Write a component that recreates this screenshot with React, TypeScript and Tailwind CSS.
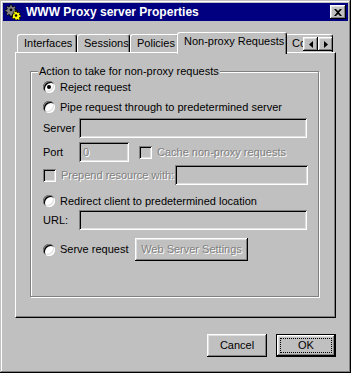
import React from "react";

// Win95 style bevels
const raised =
  "shadow-[inset_-1px_-1px_#000,inset_1px_1px_#fff,inset_-2px_-2px_#808080,inset_2px_2px_#dfdfdf]";
const sunken =
  "shadow-[inset_1px_1px_#808080,inset_-1px_-1px_#fff,inset_2px_2px_#000,inset_-2px_-2px_#dfdfdf]";
const disabledText = "text-[#808080] [text-shadow:1px_1px_0_#fff]";

function Radio({ checked }: { checked?: boolean }) {
  return (
    <div className={`w-[12px] h-[12px] rounded-full bg-white shrink-0 flex items-center justify-center ${sunken}`}>
      {checked && <div className="w-[4px] h-[4px] rounded-full bg-black" />}
    </div>
  );
}

function Checkbox() {
  return <div className={`w-[13px] h-[13px] bg-[#c0c0c0] shrink-0 ${sunken}`} />;
}

function Field({ w, value }: { w: string; value?: string }) {
  return (
    <div className={`${w} h-[20px] bg-[#c0c0c0] flex items-center pl-[4px] ${sunken}`}>
      {value && <span className={disabledText}>{value}</span>}
    </div>
  );
}

function Tab({ label, w, selected }: { label: string; w: string; selected?: boolean }) {
  return (
    <div
      className={`${w} ${
        selected
          ? "h-[22px] -mb-[2px] -ml-[2px] -mr-[2px] relative z-10 items-start pt-[2px]"
          : "h-[18px] items-center"
      } flex pl-[6px] bg-[#c0c0c0] border-l border-t border-white border-r border-r-black rounded-t-[3px] shadow-[inset_-1px_0_#808080] whitespace-nowrap`}
    >
      {label}
    </div>
  );
}

function Gears() {
  return (
    <svg width="16" height="16" viewBox="0 0 16 16">
      <g fill="#808080" stroke="#000" strokeWidth="0.8">
        <path d="M5 0.8h2v1.6l1.3.6 1.1-1.1 1.4 1.4-1.1 1.1.6 1.3h1.6v2h-1.6l-.6 1.3 1.1 1.1-1.4 1.4-1.1-1.1-1.3.6v1.6H5v-1.6l-1.3-.6-1.1 1.1-1.4-1.4 1.1-1.1-.6-1.3H.1v-2h1.6l.6-1.3-1.1-1.1 1.4-1.4 1.1 1.1L5 2.4z" />
      </g>
      <circle cx="6" cy="5.8" r="1.4" fill="#000" />
      <g fill="#ffff00" stroke="#000" strokeWidth="0.8">
        <path d="M10 7h2v1.3l1 .5.9-.9 1.3 1.3-.9.9.5 1H16v2h-1.2l-.5 1 .9.9-1.3 1.3-.9-.9-1 .5V16h-2v-1.2l-1-.5-.9.9-1.3-1.3.9-.9-.5-1H7.5v-2h1.3l.5-1-.9-.9 1.3-1.3.9.9 1-.5z" />
      </g>
      <circle cx="11" cy="11.5" r="1.3" fill="#000" />
    </svg>
  );
}

export default function App() {
  return (
    <div
      className="w-[351px] h-[373px] bg-[#c0c0c0] p-[3px] text-[11px] leading-[13px] text-black shadow-[inset_-1px_-1px_#000,inset_1px_1px_#c0c0c0,inset_-2px_-2px_#808080,inset_2px_2px_#fff]"
      style={{ fontFamily: '"Liberation Sans", Arial, sans-serif' }}
    >
      {/* Title bar */}
      <div className="h-[18px] bg-[#000080] flex items-center pl-[2px] pr-[2px]">
        <Gears />
        <span className="ml-[5px] text-white font-bold text-[12px] flex-1">WWW Proxy server Properties</span>
        <div className={`w-[16px] h-[14px] bg-[#c0c0c0] flex items-center justify-center ${raised}`}>
          <svg width="8" height="7" viewBox="0 0 8 7">
            <path d="M0 0h2l2 2 2-2h2L5 3.5 8 7H6L4 5 2 7H0l3-3.5z" fill="#000" />
          </svg>
        </div>
      </div>

      <div className="px-[12px]">
        {/* Tabs */}
        <div className="relative mt-[11px] h-[20px] flex items-end pl-[2px]">
          <Tab label="Interfaces" w="w-[60px]" />
          <Tab label="Sessions" w="w-[53px]" />
          <Tab label="Policies" w="w-[49px]" />
          <Tab label="Non-proxy Requests" w="w-[110px]" selected />
          <Tab label="Co" w="w-[48px]" />
          <div className="absolute left-[288px] top-[5px] flex">
            <div className={`w-[15px] h-[14px] bg-[#c0c0c0] flex items-center justify-center ${raised}`}>
              <svg width="4" height="7" viewBox="0 0 4 7">
                <path d="M4 0v7L0 3.5z" fill="#000" />
              </svg>
            </div>
            <div className={`w-[15px] h-[14px] bg-[#c0c0c0] flex items-center justify-center ${raised}`}>
              <svg width="4" height="7" viewBox="0 0 4 7">
                <path d="M0 0v7l4-3.5z" fill="#000" />
              </svg>
            </div>
          </div>
        </div>

        {/* Panel */}
        <div className="h-[266px] border-l border-t border-white border-r border-b border-r-black border-b-black shadow-[inset_-1px_-1px_#808080] pl-[14px] pt-[18px]">
          <div className="relative w-[289px] h-[226px] border border-[#808080] shadow-[inset_1px_1px_#fff,1px_1px_#fff] pl-[12px]">
            <span className="absolute left-[7px] -top-[7px] px-[1px] bg-[#c0c0c0]">
              Action to take for non-proxy requests
            </span>

            <div className="mt-[5px] h-[20px] flex items-center gap-[5px]">
              <Radio checked />
              <span>Reject request</span>
            </div>
            <div className="h-[20px] flex items-center gap-[5px]">
              <Radio />
              <span>Pipe request through to predetermined server</span>
            </div>
            <div className="mt-[1px] flex items-center">
              <span className="w-[36px]">Server</span>
              <Field w="w-[228px]" />
            </div>
            <div className="mt-[4px] flex items-center">
              <span className="w-[36px]">Port</span>
              <Field w="w-[50px]" value="0" />
              <div className="ml-[10px] flex items-center gap-[5px]">
                <Checkbox />
                <span className={disabledText}>Cache non-proxy requests</span>
              </div>
            </div>
            <div className="mt-[3px] flex items-center">
              <Checkbox />
              <span className={`ml-[5px] w-[114px] ${disabledText}`}>Prepend resource with:</span>
              <Field w="w-[133px]" />
            </div>
            <div className="mt-[8px] h-[16px] flex items-center gap-[5px]">
              <Radio />
              <span>Redirect client to predetermined location</span>
            </div>
            <div className="mt-[1px] flex items-center">
              <span className="w-[36px]">URL:</span>
              <Field w="w-[228px]" />
            </div>
            <div className="mt-[8px] flex items-center">
              <Radio />
              <span className="ml-[5px] w-[75px]">Serve request</span>
              <div className={`w-[113px] h-[23px] flex items-center justify-center ${raised} ${disabledText}`}>
                Web Server Settings
              </div>
            </div>
          </div>
        </div>

        {/* Buttons */}
        <div className="mt-[16px] flex justify-end gap-[9px]">
          <div className={`w-[60px] h-[23px] flex items-center justify-center ${raised}`}>Cancel</div>
          <div className="w-[60px] h-[23px] border border-black">
            <div className={`w-full h-full flex items-center justify-center p-[3px] ${raised}`}>
              <div className="w-full h-full border border-dotted border-black flex items-center justify-center">
                OK
              </div>
            </div>
          </div>
        </div>
      </div>
    </div>
  );
}
